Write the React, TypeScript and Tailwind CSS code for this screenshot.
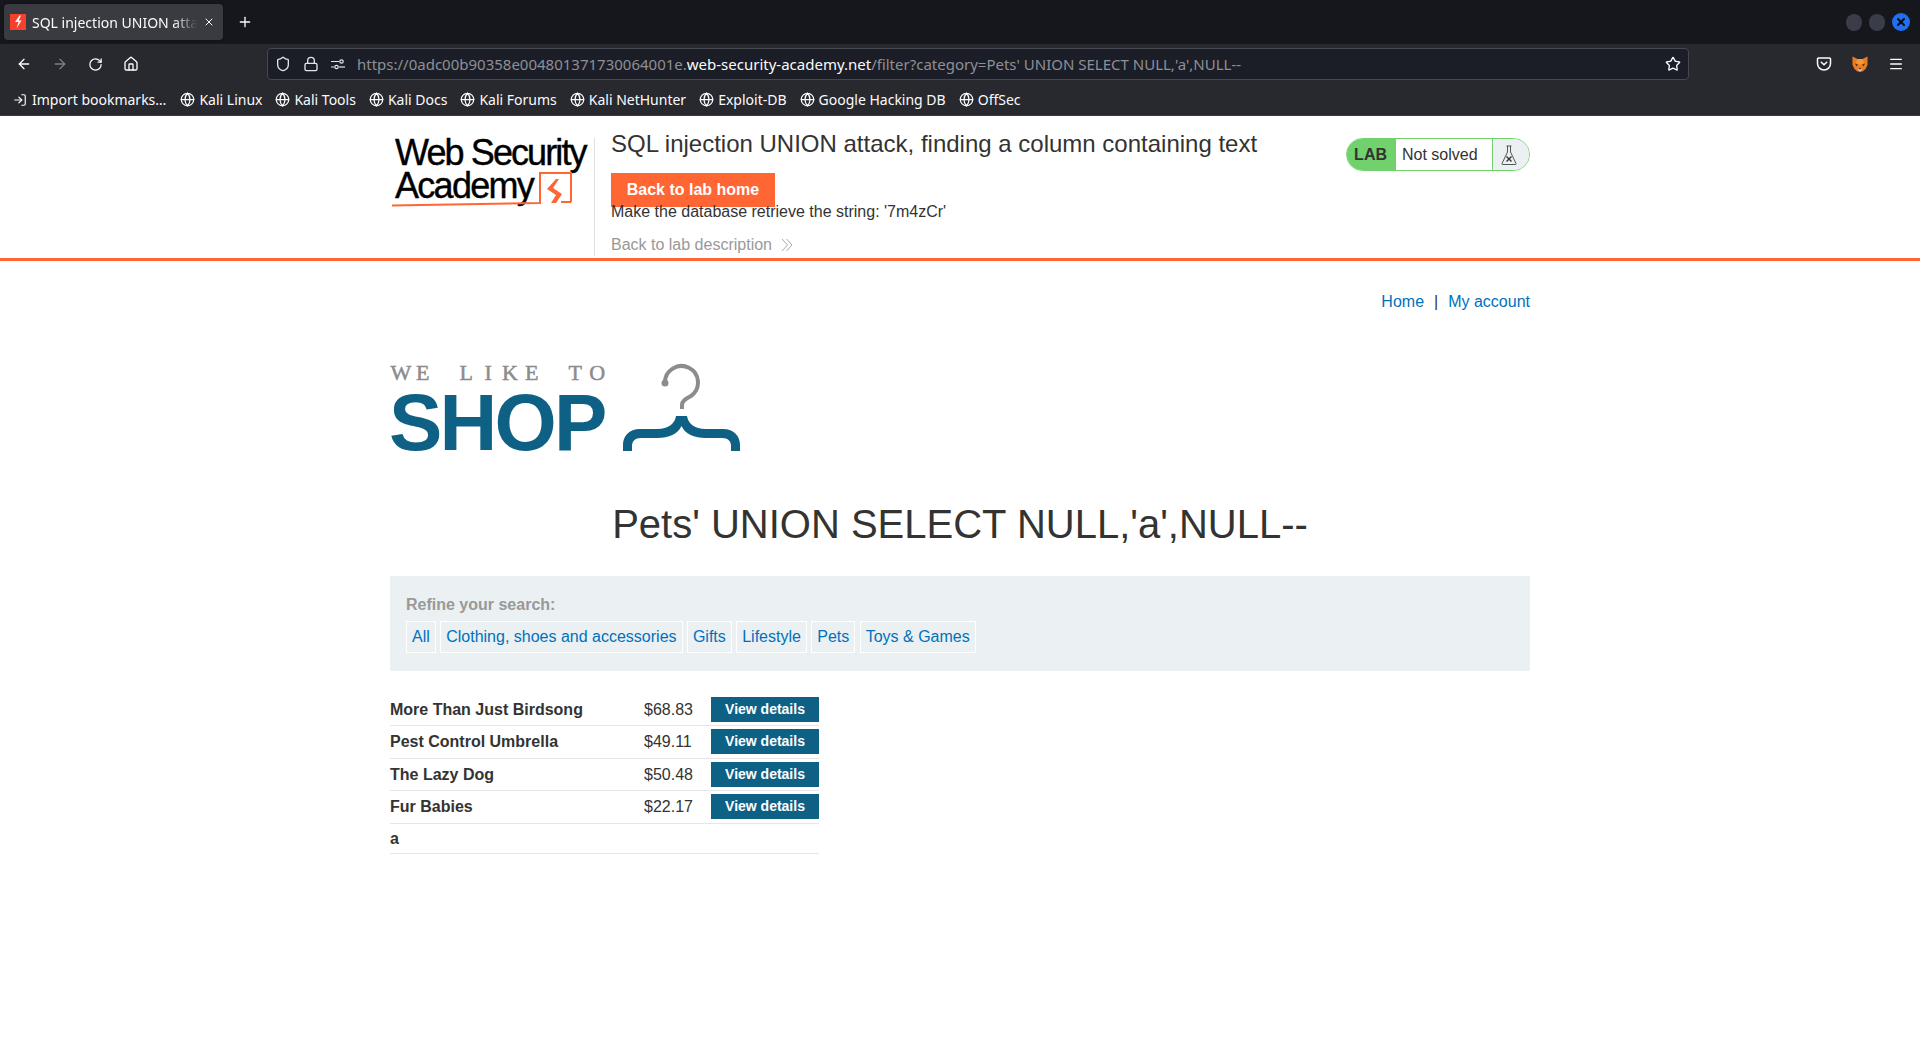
import { ArrowLeft, ArrowRight, RotateCw, Home, Shield, Lock, Star, Menu, Globe, LogIn, Plus, X } from 'lucide-react';

const bookmarks = ['Kali Linux', 'Kali Tools', 'Kali Docs', 'Kali Forums', 'Kali NetHunter', 'Exploit-DB', 'Google Hacking DB', 'OffSec'];
const filters = ['All', 'Clothing, shoes and accessories', 'Gifts', 'Lifestyle', 'Pets', 'Toys & Games'];
const products = [
  { name: 'More Than Just Birdsong', price: '$68.83' },
  { name: 'Pest Control Umbrella', price: '$49.11' },
  { name: 'The Lazy Dog', price: '$50.48' },
  { name: 'Fur Babies', price: '$22.17' },
];

function Favicon() {
  return (
    <svg width="16" height="16" viewBox="0 0 16 16" className="shrink-0">
      <rect width="16" height="16" fill="#f5402c" />
      <path d="M9.500 1.500 5 8h3.500l-2 6.500L11.500 6.500H8.700l2.300-5z" fill="#fff" />
    </svg>
  );
}

function Fox() {
  return (
    <svg width="16" height="16" viewBox="0 0 16 16">
      <path d="M.5 .5 5.500 3h5L15.500 .5 15.500 9l-2 4-3 2.500h-5l-3-2.500-2-4z" fill="#ee7c1f" />
      <path d="M5.500 3h5L12 7 8 9 4 7z" fill="#f49a3c" />
      <path d="M3 7.500l3 1-1.500 2zM13 7.500l-3 1 1.500 2z" fill="#5f3313" />
      <path d="M6 12.500h4l-1 3H7z" fill="#d7c1b3" />
      <path d="M6.500 12h3L8 13.500z" fill="#3b2413" />
    </svg>
  );
}

function Pocket() {
  return (
    <svg width="16" height="16" viewBox="0 0 16 16" fill="none" stroke="#fbfbfe" strokeWidth="1.500">
      <path d="M2.500 2h11a1 1 0 0 1 1 1v4.500a6.500 6.500 0 0 1-13 0V3a1 1 0 0 1 1-1z" />
      <path d="M5.300 6.200 8 8.800l2.700-2.600" strokeLinecap="round" />
    </svg>
  );
}

function Flask() {
  return (
    <svg width="18" height="22" viewBox="0 0 18 22" fill="none" stroke="#555" strokeWidth="1">
      <path d="M6.500 2h5M7.500 2v6L2 19.500a.7.7 0 0 0 .6 1h12.800a.7.7 0 0 0 .6-1L10.500 8V2" />
      <path d="M6.500 12.500l5 5M11.500 12.500l-5 5" strokeWidth="1.400" stroke="#333" />
    </svg>
  );
}

function Hanger() {
  return (
    <svg width="119" height="92" viewBox="0 0 119 92">
      <path d="M43 20a16.500 16.500 0 1 1 26 13c-6 3-9 5-9 9v4" fill="none" stroke="#8c8c8c" strokeWidth="4" />
      <circle cx="43" cy="20" r="3.500" fill="#8c8c8c" />
      <path d="M54 53H65C66 60 72 66 84 66H101C112 66 118 73 118 82V88H109V83C109 78 106 75 100 75H84C72 75 63 71 59.500 63C56 71 47 75 35 75H19C13 75 10 78 10 83V88H1V82C1 73 7 66 18 66H35C47 66 53 60 54 53Z" fill="#0f6085" />
    </svg>
  );
}

function Browser() {
  return (
    <div className="font-['Noto_Sans',sans-serif] text-[#fbfbfe]">
      <div className="h-[44px] bg-[#16171c] flex items-center pl-[4px] pr-[10px]">
        <div className="w-[219px] h-[36px] rounded-[4px] bg-[#3a3b41] flex items-center pl-[6px] pr-[8px] gap-[6px] shadow-[0_0_2px_rgba(0,0,0,0.5)]">
          <Favicon />
          <span className="flex-1 overflow-hidden whitespace-nowrap text-[14px] [mask-image:linear-gradient(to_left,transparent,black_24px)]">SQL injection UNION attack</span>
          <X size={12} />
        </div>
        <Plus size={16} className="ml-[14px]" />
        <div className="ml-auto flex items-center gap-[7px]">
          <span className="w-[16px] h-[17px] rounded-full bg-[#3a3d47]" />
          <span className="w-[16px] h-[17px] rounded-full bg-[#3a3d47]" />
          <span className="w-[18px] h-[18px] rounded-full bg-[#1f6ff0] flex items-center justify-center"><X size={12} strokeWidth={4} color="#0b0b10" /></span>
        </div>
      </div>
      <div className="h-[40px] bg-[#28292e] flex items-center pl-[16px] pr-[16px]">
        <ArrowLeft size={16} />
        <ArrowRight size={16} className="ml-[20px] opacity-40" />
        <RotateCw size={15} className="ml-[20px]" />
        <Home size={16} className="ml-[20px]" />
        <div className="ml-[128px] w-[1422px] h-[32px] shrink-0 rounded-[4px] bg-[#1b1e27] border border-[#46484f] flex items-center pl-[7px] pr-[7px] text-[15px] text-[#8f8f96]">
          <Shield size={16} className="text-[#e4e4e8]" />
          <Lock size={16} className="ml-[12px] text-[#e4e4e8]" />
          <svg width="16" height="16" viewBox="0 0 16 16" fill="none" stroke="#e4e4e8" strokeWidth="1.200" className="ml-[11px]">
            <path d="M1 5.500h8M1 11h3" />
            <circle cx="11.500" cy="5.500" r="1.700" />
            <circle cx="6.500" cy="11" r="1.700" />
            <path d="M9 11h6" />
          </svg>
          <span className="ml-[11px] whitespace-nowrap">https://0adc00b90358e004801371730064001e.<span className="text-[#fbfbfe]">web-security-academy.net</span>/filter?category=Pets' UNION SELECT NULL,'a',NULL--</span>
          <Star size={16} className="ml-auto text-[#fbfbfe]" />
        </div>
        <div className="ml-auto flex items-center gap-[20px]">
          <Pocket />
          <Fox />
          <Menu size={16} />
        </div>
      </div>
      <div className="h-[32px] bg-[#28292e] flex items-center pl-[13px] text-[14px] border-b border-[#3a3b40]">
        <div className="flex items-center gap-[5px] mr-[14px]">
          <LogIn size={14} />
          <span>Import bookmarks…</span>
        </div>
        {bookmarks.map((b) => (
          <div key={b} className="flex items-center gap-[4px] mr-[13px]">
            <Globe size={15} />
            <span>{b}</span>
          </div>
        ))}
      </div>
    </div>
  );
}

function LabHeader() {
  return (
    <div className="border-b-[3px] border-[#ff6633] h-[145px]">
      <div className="w-[1140px] mx-auto flex h-full">
        <div className="w-[205px] h-[118px] mt-[22px] border-r border-[#e0e0e0] shrink-0 relative text-black">
          <div className="-mt-[2px] pl-[5px] text-[36px] leading-[33px] whitespace-nowrap [-webkit-text-stroke:0.4px_black]">
            <div className="tracking-[-1.900px]">Web Security</div>
            <div className="tracking-[-1.700px]">Academy</div>
          </div>
          <svg width="200" height="80" viewBox="0 0 200 80" fill="none" className="absolute left-0 top-0" stroke="#ff6633">
            <path d="M166 41 157 51l9 6-5 8h5l6-9-9-6 6-9z" fill="#ff6633" stroke="none" />
            <path d="M171 64h10" strokeWidth="2" />
            <path d="M2 67.500c50-1 100-2 148-2.500V35h31v29" strokeWidth="2" />
          </svg>
        </div>
        <div className="flex-1 pl-[16px] pt-[14px] relative">
          <h2 className="text-[24px] leading-[28px] text-[#333332]">SQL injection UNION attack, finding a column containing text</h2>
          <a className="inline-block mt-[15px] w-[164px] h-[34px] bg-[#ff6633] text-white font-bold text-[16px] leading-[34px] text-center">Back to lab home</a>
          <p className="text-[16px] leading-[20px] text-[#333332] -mt-[5px]">Make the database retrieve the string: '7m4zCr'</p>
          <div className="mt-[13px] flex items-center gap-[9px] text-[16px] leading-[20px] text-[#999]">
            Back to lab description
            <svg width="12" height="14" viewBox="0 0 12 14" fill="none" stroke="#aaa" strokeWidth="1">
              <path d="M1 1l5.500 6L1 13M5.500 1 11 7l-5.500 6" />
            </svg>
          </div>
          <div className="absolute right-0 top-[22px] w-[184px] h-[33px] rounded-full border border-[#70d16d] flex overflow-hidden text-[16px] items-stretch">
            <span className="w-[49px] bg-[#70d16d] font-bold text-[#333332] flex items-center justify-end pr-[9px]">LAB</span>
            <span className="flex-1 flex items-center pl-[6px] text-[#333332]">Not solved</span>
            <span className="w-[37px] bg-[#ebf0f2] border-l border-[#70d16d] flex items-center justify-center pr-[5px]"><Flask /></span>
          </div>
        </div>
      </div>
    </div>
  );
}

function Shop() {
  return (
    <div className="w-[1140px] mx-auto text-[#333332]">
      <div className="flex justify-end items-center h-[20px] mt-[31px] text-[16px] text-[#0071bc]">
        <a>Home</a>
        <span className="text-[#333332] mx-[10px]">|</span>
        <a>My account</a>
      </div>
      <div className="flex items-start mt-[51px] h-[92px]">
        <div className="w-[232px]">
          <div className="flex -mt-[1px] font-['Liberation_Serif',serif] text-[#8c8c8c] text-[22px] leading-[22px] [-webkit-text-stroke:0.5px_#8c8c8c] whitespace-pre">
            {'WE LIKE TO'.split('').map((c, i) => (
              <span key={i} className="w-[21.800px] text-center">{c}</span>
            ))}
          </div>
          <div className="font-bold text-[#0f6085] text-[80px] leading-[66px] mt-[6px] tracking-[-2.800px] -ml-[1px]">SHOP</div>
        </div>
        <Hanger />
      </div>
      <h1 className="text-center text-[40px] leading-[48px] mt-[45px]">Pets' UNION SELECT NULL,'a',NULL--</h1>
      <section className="mt-[28px] h-[95px] bg-[#ebf0f2] px-[16px] pt-[19px]">
        <div className="text-[16px] leading-[20px] font-bold text-[#999]">Refine your search:</div>
        <div className="flex gap-[4.400px] mt-[6px]">
          {filters.map((f) => (
            <a key={f} className="h-[32px] px-[5px] border border-white text-[16px] leading-[30px] text-[#0071bc] whitespace-nowrap">{f}</a>
          ))}
        </div>
      </section>
      <table className="mt-[22px] w-[429px] text-[16px] border-collapse">
        <tbody>
          {products.map((p) => (
            <tr key={p.name} className="h-[32.500px] border-b border-[#e6e6e6]">
              <td className="font-bold w-[254px] p-0 pt-[1px]">{p.name}</td>
              <td className="w-[67px] p-0 pt-[1px]">{p.price}</td>
              <td className="p-0">
                <a className="block w-[108px] h-[25px] bg-[#0f6085] text-white text-[14px] leading-[24px] font-bold text-center ml-auto">View details</a>
              </td>
            </tr>
          ))}
          <tr className="h-[30px] border-b border-[#e6e6e6]">
            <td className="font-bold p-0 pt-[1px]">a</td>
            <td className="p-0" />
            <td className="p-0" />
          </tr>
        </tbody>
      </table>
    </div>
  );
}

export default function App() {
  return (
    <div className="min-h-screen bg-white font-['Liberation_Sans',Arial,sans-serif]">
      <Browser />
      <LabHeader />
      <Shop />
    </div>
  );
}
